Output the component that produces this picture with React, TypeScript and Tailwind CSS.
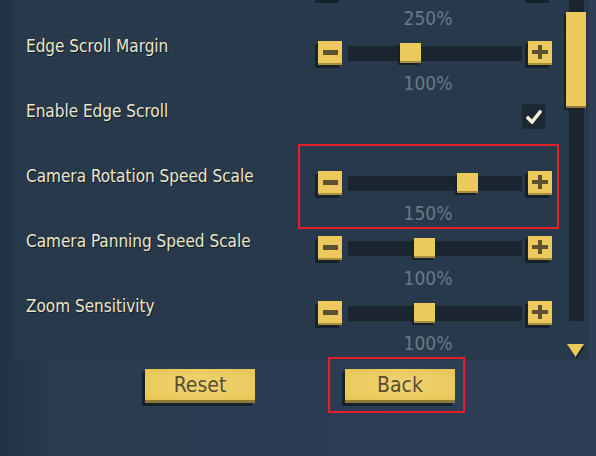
import React from 'react';

type Row =
  | { kind: 'slider'; label: string; value: string; thumb: number }
  | { kind: 'check'; label: string; checked: boolean };

const rows: Row[] = [
  { kind: 'slider', label: '', value: '250%', thumb: 120 },
  { kind: 'slider', label: 'Edge Scroll Margin', value: '100%', thumb: 52 },
  { kind: 'check', label: 'Enable Edge Scroll', checked: true },
  { kind: 'slider', label: 'Camera Rotation Speed Scale', value: '150%', thumb: 109 },
  { kind: 'slider', label: 'Camera Panning Speed Scale', value: '100%', thumb: 66 },
  { kind: 'slider', label: 'Zoom Sensitivity', value: '100%', thumb: 66 },
];

const gameFont = "font-['DejaVu_Sans_Condensed','Liberation_Sans',sans-serif]";

const StepButton = ({ sign }: { sign: 'minus' | 'plus' }) => (
  <button className="relative w-[24px] h-[24px] bg-[#ebc95c] border-b-2 border-[#a68e3e] shadow-[-3px_3px_0_#17212c] flex items-center justify-center">
    {sign === 'minus' ? (
      <span className="block w-[15px] h-[5px] bg-[#5c5230]" />
    ) : (
      <span className="relative block w-[16px] h-[14px]">
        <span className="absolute left-0 right-0 top-[5px] h-[4px] bg-[#5c5230]" />
        <span className="absolute top-0 bottom-0 left-[6px] w-[4px] bg-[#5c5230]" />
      </span>
    )}
  </button>
);

const Slider = ({ value, thumb }: { value: string; thumb: number }) => (
  <div className="w-[234px] flex flex-col items-center">
    <div className="flex items-center w-full h-[24px] mt-[8px]">
      <StepButton sign="minus" />
      <div className="relative flex-1 mx-[6px] h-[15px] bg-[#1b2530]">
        <div
          className="absolute top-[-3px] w-[21px] h-[20px] bg-[#ebc95c] border-b-2 border-[#a68e3e] shadow-[-2px_2px_0_#17212c]"
          style={{ left: thumb }}
        />
      </div>
      <StepButton sign="plus" />
    </div>
    <div className={`mt-[7px] mr-[14px] text-[19px] leading-[22px] text-[#6a7884] ${gameFont}`}>{value}</div>
  </div>
);

const Check = () => (
  <div className="w-[234px] flex justify-end pr-[7px] pt-[6px]">
    <div className="w-[23px] h-[25px] bg-[#1c2834] flex items-center justify-center">
      <svg width="16" height="14" viewBox="0 0 16 14">
        <path d="M2 8 L6 12 L14 2" fill="none" stroke="#f4f0dc" strokeWidth="3.5" strokeLinecap="square" />
      </svg>
    </div>
  </div>
);

const GameButton = ({ label }: { label: string }) => (
  <button
    className={`w-[110px] h-[34px] bg-[radial-gradient(ellipse_at_center,#efd377_0%,#ebca5d_70%,#e6c352_100%)] border-b-[3px] border-[#8f7a35] shadow-[-3px_3px_0_#17212c] text-[21px] leading-[30px] text-[#5a5030] ${gameFont}`}
  >
    {label}
  </button>
);

export default function App() {
  return (
    <div className="relative w-[596px] h-[456px] overflow-hidden bg-[linear-gradient(to_right,#233244_0%,#2a3c50_10%,#2c3f55_100%)]">
      <div className="flex h-[360px]">
        <div className="w-[15px]" />
        <div className="relative w-[548px] overflow-hidden bg-[#29394c]">
          <div className="-mt-[33px]">
            {rows.map((row, i) => (
              <div key={i} className="h-[65px] flex justify-between pl-[11px] pr-[11px] border-t border-[#2c3e52]">
                <div
                  className={`pt-[1px] text-[17px] leading-[24px] text-[#ebe6c9] [text-shadow:1px_1px_0_#141d27] ${gameFont}`}
                >
                  {row.label}
                </div>
                {row.kind === 'slider' ? <Slider value={row.value} thumb={row.thumb} /> : <Check />}
              </div>
            ))}
          </div>
        </div>
        <div className="w-[26px] bg-[#29394c] flex flex-col items-center">
          <div className="relative w-[15px] h-[321px] bg-[#1b2530] flex justify-center">
            <div className="absolute top-[12px] w-[20px] h-[96px] bg-[#ebc95c] border-b-2 border-[#8f7a35] shadow-[-2px_2px_0_#17212c]" />
          </div>
          <svg width="18" height="16" viewBox="0 0 18 16" className="mt-[22px]">
            <polygon points="1,3 18,3 9.5,16" fill="#17212c" />
            <polygon points="0,1 17,1 8.5,14" fill="#ebc95c" />
          </svg>
        </div>
      </div>

      <div className="flex justify-center gap-[90px] pt-[9px] pl-[4px]">
        <GameButton label="Reset" />
        <GameButton label="Back" />
      </div>

      <div className="absolute left-[298px] top-[144px] w-[261px] h-[85px] border-2 border-[#e81f2b]" />
      <div className="absolute left-[328px] top-[357px] w-[137px] h-[56px] border-2 border-[#e81f2b]" />
    </div>
  );
}
